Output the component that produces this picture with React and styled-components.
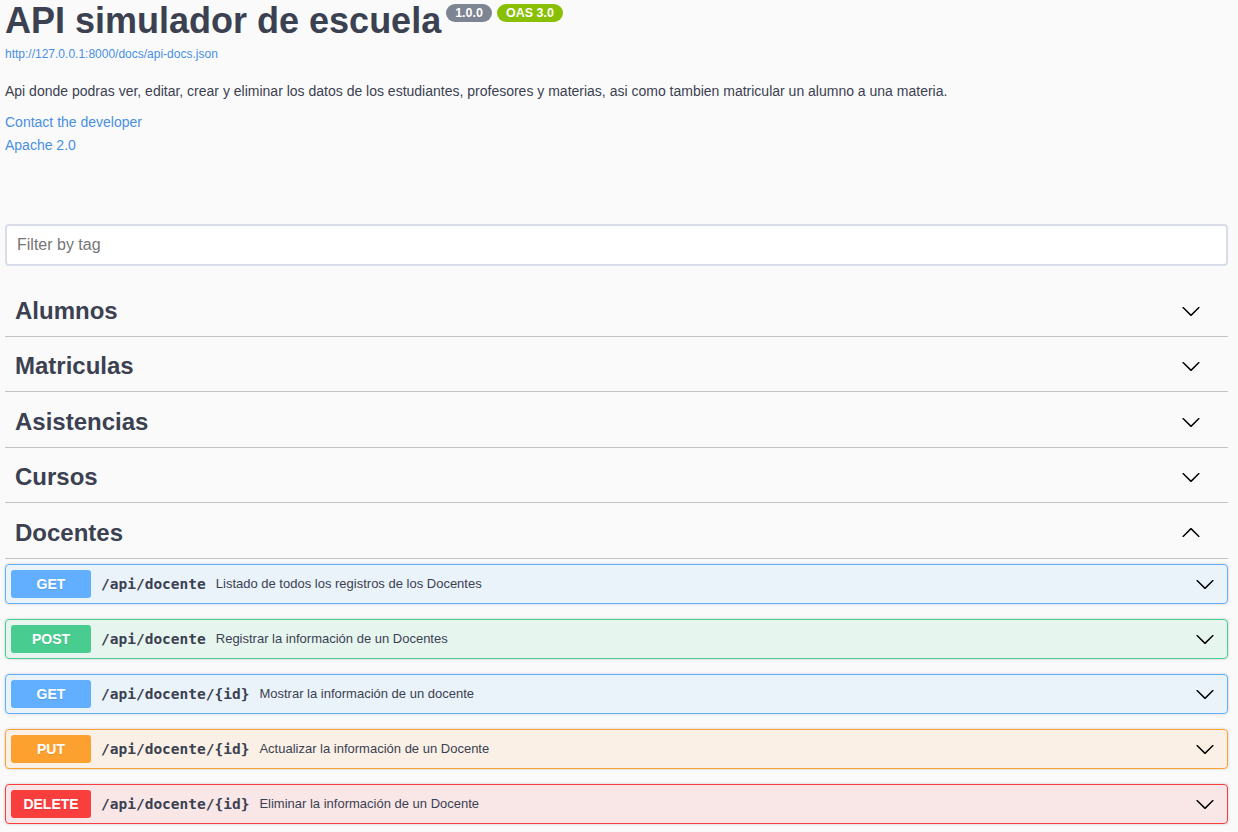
import styled, { createGlobalStyle } from "styled-components"

const GlobalStyle = createGlobalStyle`
  html, body {
    margin: 0;
    padding: 0;
    background: #fafafa;
    font-family: "Liberation Sans", Arial, sans-serif;
    color: #3b4151;
  }
`

const METHODS = {
  GET: { color: "#61affe", bg: "rgba(97,175,254,.1)" },
  POST: { color: "#49cc90", bg: "rgba(73,204,144,.1)" },
  PUT: { color: "#fca130", bg: "rgba(252,161,48,.1)" },
  DELETE: { color: "#f93e3e", bg: "rgba(249,62,62,.1)" },
}

const tags = ["Alumnos", "Matriculas", "Asistencias", "Cursos"]

const operations = [
  { method: "GET", path: "/api/docente", desc: "Listado de todos los registros de los Docentes" },
  { method: "POST", path: "/api/docente", desc: "Registrar la información de un Docentes" },
  { method: "GET", path: "/api/docente/{id}", desc: "Mostrar la información de un docente" },
  { method: "PUT", path: "/api/docente/{id}", desc: "Actualizar la información de un Docente" },
  { method: "DELETE", path: "/api/docente/{id}", desc: "Eliminar la información de un Docente" },
]

const Arrow = ({ up }) => (
  <ArrowSvg viewBox="0 0 20 20" width="20" height="20" $up={up}>
    <path
      fill="#000"
      d="M17.418 6.109c.272-.268.709-.268.979 0s.271.701 0 .969l-7.908 7.83c-.27.268-.707.268-.979 0l-7.908-7.83c-.27-.268-.27-.701 0-.969.271-.268.709-.268.979 0L10 13.25l7.418-7.141z"
    />
  </ArrowSvg>
)

const App = () => {
  return (
    <>
      <GlobalStyle />
      <Wrapper>
        <Info>
          <Title>
            API simulador de escuela
            <Badge $bg="#7d8492">1.0.0</Badge>
            <Badge $bg="#89bf04">OAS 3.0</Badge>
          </Title>
          <SpecLink href="#">http://127.0.0.1:8000/docs/api-docs.json</SpecLink>
          <Description>
            Api donde podras ver, editar, crear y eliminar los datos de los estudiantes, profesores y materias, asi como tambien matricular un alumno a una materia.
          </Description>
          <InfoLink href="#" $top={15}>Contact the developer</InfoLink>
          <InfoLink href="#" $top={7}>Apache 2.0</InfoLink>
        </Info>

        <Filter placeholder="Filter by tag" />

        {tags.map((tag) => (
          <Tag key={tag}>
            <TagTitle>{tag}</TagTitle>
            <TagArrow><Arrow /></TagArrow>
          </Tag>
        ))}

        <Tag>
          <TagTitle>Docentes</TagTitle>
          <TagArrow><Arrow up /></TagArrow>
        </Tag>

        <div>
          {operations.map((op, i) => (
            <Opblock key={i} $color={METHODS[op.method].color} $bg={METHODS[op.method].bg}>
              <MethodBadge $color={METHODS[op.method].color}>{op.method}</MethodBadge>
              <OpPath>{op.path}</OpPath>
              <OpDesc>{op.desc}</OpDesc>
              <OpArrow><Arrow /></OpArrow>
            </Opblock>
          ))}
        </div>
      </Wrapper>
    </>
  )
}

const Wrapper = styled.div`
  padding: 0 10px 0 5px;
`

const Info = styled.div`
  display: flex;
  flex-direction: column;
  align-items: flex-start;
`

const Title = styled.h2`
  margin: 0;
  font-size: 36px;
  line-height: 42px;
  font-weight: 700;
  color: #3b4151;
  display: flex;
  align-items: flex-start;
`

const Badge = styled.small`
  margin: 4px 0 0 5px;
  padding: 2px 9px;
  border-radius: 57px;
  background: ${(p) => p.$bg};
  color: #fff;
  font-size: 12.5px;
  line-height: 14px;
  font-weight: 700;
  &:first-of-type {
    margin-left: 5px;
  }
`

const SpecLink = styled.a`
  margin-top: 5px;
  font-size: 12px;
  line-height: 14px;
  color: #4990e2;
  text-decoration: none;
`

const Description = styled.p`
  margin: 22px 0 0;
  font-size: 14px;
  line-height: 16px;
  color: #3b4151;
`

const InfoLink = styled.a`
  margin-top: ${(p) => p.$top}px;
  font-size: 14px;
  line-height: 16px;
  color: #4990e2;
  text-decoration: none;
`

const Filter = styled.input`
  display: block;
  box-sizing: border-box;
  width: 100%;
  height: 42px;
  margin: 71px 0 20px;
  padding: 8px 10px;
  border: 2px solid #d8dde7;
  border-radius: 4px;
  background: #fff;
  font-family: "Liberation Sans", Arial, sans-serif;
  font-size: 16px;
  outline: none;
  &::placeholder {
    color: #757575;
  }
`

const Tag = styled.div`
  display: flex;
  align-items: center;
  height: 29.5px;
  padding: 10px 27px 10px 10px;
  margin-bottom: 5px;
  border-bottom: 1px solid rgba(59, 65, 81, 0.3);
`

const TagTitle = styled.h3`
  flex: 1;
  margin: 0;
  font-size: 24px;
  font-weight: 700;
  color: #3b4151;
`

const TagArrow = styled.div`
  display: flex;
  align-items: center;
`

const ArrowSvg = styled.svg`
  display: block;
  transform: ${(p) => (p.$up ? "rotate(180deg)" : "none")};
`

const Opblock = styled.div`
  display: flex;
  align-items: center;
  padding: 5px;
  margin-bottom: 15px;
  border: 1px solid ${(p) => p.$color};
  border-radius: 4px;
  background: ${(p) => p.$bg};
  box-shadow: 0 0 3px rgba(0, 0, 0, 0.19);
`

const MethodBadge = styled.span`
  min-width: 80px;
  padding: 6px 0;
  border-radius: 3px;
  background: ${(p) => p.$color};
  color: #fff;
  font-size: 14px;
  line-height: 16px;
  font-weight: 700;
  text-align: center;
  text-shadow: 0 1px 0 rgba(0, 0, 0, 0.1);
`

const OpPath = styled.span`
  padding: 0 10px;
  font-family: "DejaVu Sans Mono", monospace;
  font-size: 14.5px;
  font-weight: 700;
  color: #3b4151;
`

const OpDesc = styled.span`
  flex: 1;
  font-size: 13px;
  color: #3b4151;
`

const OpArrow = styled.div`
  margin-right: 7px;
`

export default App
